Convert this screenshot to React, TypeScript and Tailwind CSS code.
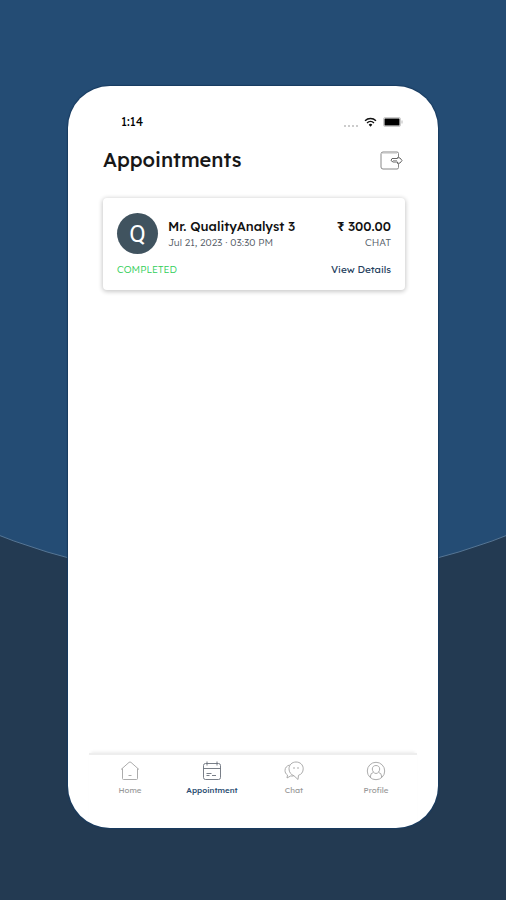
import type { ReactNode } from "react";

function Wifi() {
  return (
    <svg className="h-[10px] w-[13px]" viewBox="0 0 14 11" fill="none" stroke="#111" strokeWidth="1.6" aria-hidden="true">
      <path d="M1 4.2a8.6 8.6 0 0 1 12 0" />
      <path d="M3.2 6.6a5.4 5.4 0 0 1 7.6 0" />
      <path d="M7 10.6 5 8.5a2.9 2.9 0 0 1 4 0z" fill="#111" stroke="none" />
    </svg>
  );
}

function Battery() {
  return (
    <svg className="h-[10px] w-[20px]" viewBox="0 0 20 10" aria-hidden="true">
      <rect x=".5" y=".5" width="17" height="9" rx="1.5" fill="#fff" stroke="#ccc" />
      <rect x="1.500" y="1.500" width="15" height="7" rx=".5" fill="#000" />
      <path d="M19 3.500v3" stroke="#bbb" />
    </svg>
  );
}

function Wallet() {
  return (
    <svg className="h-[19px] w-[23px]" viewBox="0 0 23 19" fill="none" stroke="#888" strokeWidth="1" aria-hidden="true">
      <path d="M18.500 6V2.500a1.500 1.500 0 0 0-1.500-1.500H3A2 2 0 0 0 1 3v13a2 2 0 0 0 2 2h14a1.500 1.500 0 0 0 1.500-1.500V13" />
      <path d="M1.500 2.500H17" stroke="#ddd" />
      <path d="M17.500 6.500 20 7l2 2.500-2 2.500-2.500.5v-1.500H13L11 9.500 12 7.500h5.500z" stroke="#666" />
      <path d="M13 9.500h4" stroke="#aaa" />
    </svg>
  );
}

const icons: Record<string, ReactNode> = {
  Home: (
    <>
      <path d="M1 8.500 9 1.400a1.500 1.500 0 0 1 2 0l8 7.100" />
      <path d="M2.500 7.500v10a1 1 0 0 0 1 1h13a1 1 0 0 0 1-1v-10" />
      <path d="M8.500 14.500h3" />
    </>
  ),
  Appointment: (
    <>
      <rect x="1.500" y="2.500" width="17" height="16" rx="2" />
      <path d="M1.500 7.500h17M5 .5v4M15 .5v4" />
      <path d="M4.500 12.500h5M4.500 14.500h3M10 14.500h4" />
    </>
  ),
  Chat: (
    <>
      <path d="M12 1c4.200 0 7.200 2.800 7.200 6.800 0 3.300-1.700 5.500-4.700 6.500l-.5 4.200-4-3.700C7 13.700 5 11.200 5 7.800 5 3.900 8 1 12 1z" />
      <path d="M5.500 4C2.800 4.800 1 6.700 1 9.500c0 2 .9 3.500 2.500 4.500l-.5 3 3.500-2h3" />
      <path d="M10 6v2M14 6v2" />
    </>
  ),
  Profile: (
    <>
      <circle cx="10" cy="10" r="8.700" />
      <path d="M10 4.500c2.300 0 3.700 1.500 3.700 3.500S12 12.500 10 12.500 6.300 10 6.300 8 7.700 4.500 10 4.500z" />
      <path d="M4.500 16.500v-1.500a3.500 3.500 0 0 1 3-3.500M15.500 16.500v-1.500a3.500 3.500 0 0 0-3-3.500" />
    </>
  ),
};

function NavItem({ label, active = false }: { label: string; active?: boolean }) {
  return (
    <a
      href="#"
      aria-current={active ? "page" : undefined}
      className={`flex flex-1 flex-col items-center gap-[3px] ${active ? "text-[#284b70]" : "text-[#999]"}`}
    >
      <svg
        className={`size-5 ${active ? "text-[#6a707a]" : "text-[#a3a3a3]"}`}
        viewBox="0 0 20 20"
        fill="none"
        stroke="currentColor"
        strokeWidth="0.9"
        strokeLinejoin="round"
        aria-hidden="true"
      >
        {icons[label]}
      </svg>
      <span className={`text-[8px] leading-3 ${active ? "font-medium" : "font-normal"}`}>{label}</span>
    </a>
  );
}

export default function App() {
  return (
    <div className="relative flex min-h-screen overflow-hidden bg-[#233a52] px-[68px] pt-[86px] pb-[72px] font-['Lexend','Inter',sans-serif]">
      <div className="absolute bottom-[317px] left-1/2 size-[1420px] -translate-x-1/2 rounded-full border border-[#557594] bg-[#244c74]" />
      <div className="relative flex min-w-0 flex-1 flex-col rounded-[42px] bg-white px-[21px] shadow-[0_0_1px_1px_#183b60]">
        <div className="flex items-center justify-between pt-7 pr-[14px] pl-8 text-black">
          <span className="text-[12px] leading-4 font-normal">1:14</span>
          <div className="flex items-center gap-[6px]">
            <div className="flex gap-[2px] pt-[7px]">
              <span className="size-[2px] bg-[#ccc]" />
              <span className="size-[2px] bg-[#ccc]" />
              <span className="size-[2px] bg-[#ccc]" />
              <span className="size-[2px] bg-[#ccc]" />
            </div>
            <Wifi />
            <Battery />
          </div>
        </div>

        <main className="flex-1 pr-3 pl-3.5">
          <header className="flex items-center justify-between pt-4 pr-[2px]">
            <h1 className="text-[20px] leading-7 font-medium text-[#171717]">Appointments</h1>
            <button type="button" aria-label="Wallet">
              <Wallet />
            </button>
          </header>

          <article className="mt-6 rounded-[4px] bg-white px-3.5 pt-[15px] pb-3 shadow-[0_1px_4px_1px_#00000033]">
            <div className="flex items-center gap-[10px]">
              <div className="flex size-[41px] shrink-0 items-center justify-center rounded-full bg-[#40535f] font-['Roboto',sans-serif] text-[24px] text-white">
                Q
              </div>
              <div className="min-w-0 flex-1">
                <div className="flex justify-between text-[13px] leading-[18px] font-medium whitespace-nowrap text-[#111]">
                  <h2>Mr. QualityAnalyst 3</h2>
                  <span>₹ 300.00</span>
                </div>
                <div className="flex justify-between text-[10px] leading-4 font-light whitespace-nowrap text-[#525a65]">
                  <span>Jul 21, 2023 · 03:30 PM</span>
                  <span>CHAT</span>
                </div>
              </div>
            </div>
            <div className="mt-2 flex justify-between text-[10px] leading-4">
              <span className="font-light text-[#2fce58]">COMPLETED</span>
              <a href="#" className="font-normal text-[#263f60]">
                View Details
              </a>
            </div>
          </article>
        </main>

        <nav className="flex h-[75px] border-t-2 border-[#eeeeee] pt-[6px] shadow-[0_-3px_3px_-2px_#00000014]">
          <NavItem label="Home" />
          <NavItem label="Appointment" active />
          <NavItem label="Chat" />
          <NavItem label="Profile" />
        </nav>
      </div>
    </div>
  );
}
